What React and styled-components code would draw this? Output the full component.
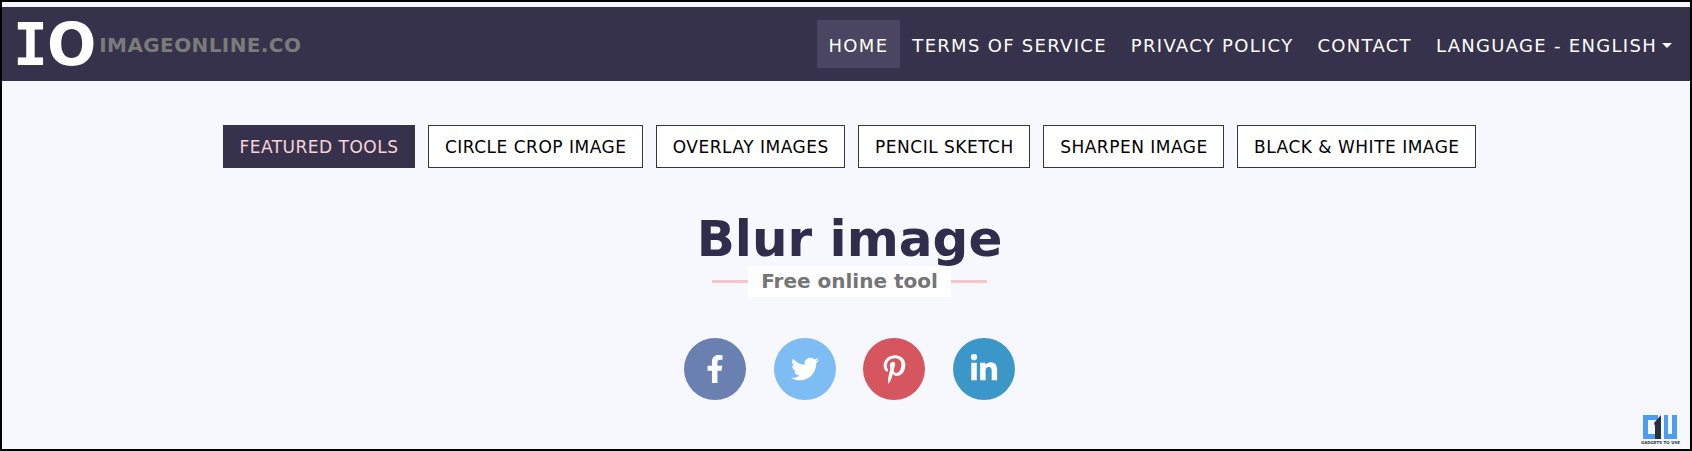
import React from 'react';
import styled, { createGlobalStyle } from 'styled-components';
import { FaFacebookF, FaTwitter, FaPinterestP, FaLinkedinIn } from 'react-icons/fa';

const tools = [
  'CIRCLE CROP IMAGE',
  'OVERLAY IMAGES',
  'PENCIL SKETCH',
  'SHARPEN IMAGE',
  'BLACK & WHITE IMAGE',
];

const links = ['HOME', 'TERMS OF SERVICE', 'PRIVACY POLICY', 'CONTACT'];

const socials = [
  { id: 'fb', color: '#6a80b1', Icon: FaFacebookF, size: 28 },
  { id: 'tw', color: '#7dbdf3', Icon: FaTwitter, size: 28 },
  { id: 'pin', color: '#d5565f', Icon: FaPinterestP, size: 29 },
  { id: 'in', color: '#3c97c9', Icon: FaLinkedinIn, size: 30 },
];

export default function App() {
  return (
    <Frame>
      <GlobalStyle />
      <Nav>
        <Brand>
          <BrandMark>
            <BrandSlab>I</BrandSlab>O
          </BrandMark>
          <BrandName>IMAGEONLINE.CO</BrandName>
        </Brand>
        <Links>
          {links.map((l, i) => (
            <NavLink key={l} $active={i === 0}>
              {l}
            </NavLink>
          ))}
          <NavLink>
            LANGUAGE - ENGLISH
            <Caret />
          </NavLink>
        </Links>
      </Nav>
      <Main>
        <Tabs>
          <Tab $active>FEATURED TOOLS</Tab>
          {tools.map(t => (
            <Tab key={t}>{t}</Tab>
          ))}
        </Tabs>
        <Title>Blur image</Title>
        <Subtitle>
          <SubtitleText>Free online tool</SubtitleText>
        </Subtitle>
        <Socials>
          {socials.map(({ id, color, Icon, size }) => (
            <Social key={id} $color={color}>
              <Icon size={size} />
            </Social>
          ))}
        </Socials>
      </Main>
      <Watermark>
        <svg width="34" height="25" viewBox="0 0 34 25">
          <path fill="#4a9df0" d="M0 0h15v5H5v14h7v-7h3v12H0z" />
          <path fill="#26323f" d="M11 8l7-8v24h-6V11z" />
          <path fill="#4a9df0" d="M21 0h4v19h4V0h5v24H21z" />
        </svg>
        <WatermarkText>GADGETS TO USE</WatermarkText>
      </Watermark>
    </Frame>
  );
}

const GlobalStyle = createGlobalStyle`
  html, body {
    margin: 0;
    padding: 0;
    background: #f7f8fe;
  }
`;

const Frame = styled.div`
  position: relative;
  box-sizing: border-box;
  height: 451px;
  overflow: hidden;
  padding-top: 5px;
  background: #f7f8fe;
  border: 2px solid #000;
  font-family: "DejaVu Sans", sans-serif;
`;

const Nav = styled.div`
  display: flex;
  align-items: center;
  justify-content: space-between;
  height: 74px;
  padding-right: 18px;
  background: #36324b;
`;

const Brand = styled.div`
  display: flex;
  align-items: center;
  padding: 2px 0 0 11px;
`;

const BrandMark = styled.span`
  font-weight: 700;
  font-size: 58px;
  line-height: 72px;
  color: #fff;
`;

const BrandSlab = styled.span`
  font-family: "DejaVu Sans Mono", monospace;
  margin-right: -1px;
`;

const BrandName = styled.span`
  margin-left: 3px;
  font-weight: 700;
  font-size: 20px;
  letter-spacing: 0.4px;
  color: #7b7b79;
`;

const Links = styled.div`
  display: flex;
  align-items: center;
`;

const NavLink = styled.div`
  display: flex;
  align-items: center;
  box-sizing: border-box;
  height: 48px;
  padding: 2px 12px 0;
  font-size: 18px;
  letter-spacing: 1.3px;
  color: #fff;
  background: ${p => (p.$active ? '#4a4560' : 'transparent')};
  &:last-child {
    padding-right: 0;
  }
`;

const Caret = styled.span`
  margin-left: 5px;
  border-left: 5px solid transparent;
  border-right: 5px solid transparent;
  border-top: 5px solid #fff;
`;

const Main = styled.div`
  display: flex;
  flex-direction: column;
  align-items: center;
  padding: 44px 0 0 7px;
`;

const Tabs = styled.div`
  display: flex;
  gap: 13px;
`;

const Tab = styled.div`
  display: flex;
  align-items: center;
  box-sizing: border-box;
  height: 43px;
  padding: 0 15.7px;
  font-size: 17px;
  letter-spacing: 0.5px;
  border: 1px solid #36324b;
  color: ${p => (p.$active ? '#fbd3d7' : '#000')};
  background: ${p => (p.$active ? '#36324b' : '#fff')};
`;

const Title = styled.h1`
  margin: 41px 0 0;
  font-size: 50px;
  line-height: 60px;
  font-weight: 700;
  color: #2f2d4b;
`;

const Subtitle = styled.div`
  display: flex;
  justify-content: center;
  width: 275px;
  margin-top: -3px;
  background: linear-gradient(#f5c6c8, #f5c6c8) center / 100% 3px no-repeat;
`;

const SubtitleText = styled.span`
  padding: 0 13px;
  font-size: 20px;
  line-height: 31px;
  font-weight: 700;
  color: #757575;
  background: #fff;
`;

const Socials = styled.div`
  display: flex;
  gap: 27.5px;
  margin-top: 41px;
`;

const Social = styled.div`
  display: flex;
  align-items: center;
  justify-content: center;
  width: 62px;
  height: 62px;
  border-radius: 50%;
  color: #fff;
  background: ${p => p.$color};
`;

const Watermark = styled.div`
  position: absolute;
  right: 10px;
  bottom: 4px;
  display: flex;
  flex-direction: column;
  align-items: center;
`;

const WatermarkText = styled.span`
  font-size: 4px;
  line-height: 5px;
  font-weight: 700;
  color: #333;
  white-space: nowrap;
`;
